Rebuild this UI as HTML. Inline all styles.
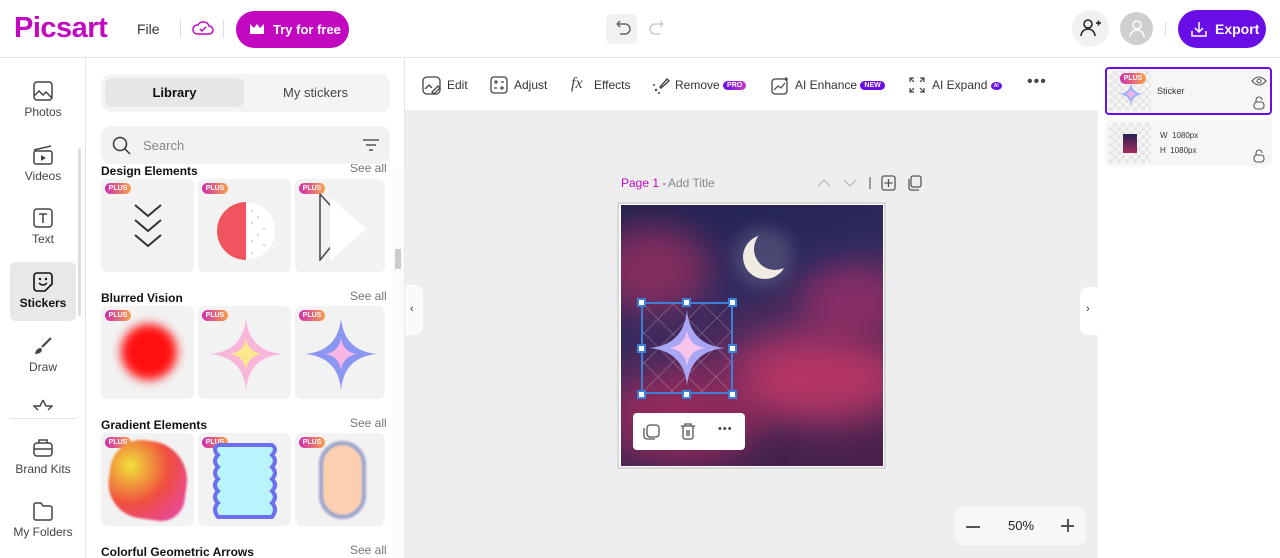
<!DOCTYPE html>
<html><head><meta charset="utf-8"><style>
*{box-sizing:border-box;margin:0;padding:0}
body{width:1280px;height:558px;overflow:hidden;font-family:"Liberation Sans",sans-serif;background:#fff;position:relative;color:#222}
.a{position:absolute}
.top{left:0;top:0;width:1280px;height:58px;border-bottom:1px solid #e6e6e6;background:#fff}
.logo{left:14px;top:12px;font-size:29px;font-weight:bold;color:#c209c1;letter-spacing:-0.5px}
.rail .it{position:absolute;left:10px;width:66px;text-align:center;font-size:12px;color:#444}
.rail svg{display:block;margin:0 auto 4px}
.tabs{left:101px;top:74px;width:289px;height:38px;background:#f4f4f4;border-radius:10px}
.search{left:101px;top:126px;width:289px;height:38px;background:#f2f2f2;border-radius:10px}
.sec{font-size:12px;color:#111;font-weight:bold}
.see{font-size:12px;color:#777}
.card{position:absolute;width:93px;height:93px;background:#f2f2f2;border-radius:6px;overflow:hidden}
.plus{position:absolute;left:4px;top:4px;width:26px;height:11px;border-radius:6px;background:linear-gradient(90deg,#d02cb0,#f8a24a);color:#fff;font-size:7px;font-weight:bold;text-align:center;line-height:11px}
.tb{font-size:12px;color:#333;top:78px}
.badge{display:inline-block;font-size:7px;font-weight:bold;color:#fff;border-radius:6px;padding:1px 4px;vertical-align:middle}
</style></head><body>
<div class="a top"></div>
<div class="a logo">Picsart</div>
<div class="a" style="left:137px;top:21px;font-size:14px;color:#333">File</div>
<div class="a" style="left:180px;top:20px;width:1px;height:18px;background:#ddd"></div>
<svg class="a" style="left:192px;top:19px" width="22" height="18" viewBox="0 0 22 18"><path d="M5 15h12a4 4 0 0 0 0-8 6 6 0 0 0-11-1A4.5 4.5 0 0 0 5 15z" fill="none" stroke="#c209c1" stroke-width="1.5"/><path d="M8 10l2 2 4-4" fill="none" stroke="#c209c1" stroke-width="1.5"/></svg>
<div class="a" style="left:223px;top:20px;width:1px;height:18px;background:#ddd"></div>
<div class="a" style="left:236px;top:11px;width:113px;height:37px;border-radius:19px;background:#c209c1;color:#fff;font-size:13px;font-weight:bold;line-height:37px;padding-left:37px;white-space:nowrap">Try for free</div>
<svg class="a" style="left:249px;top:23px" width="16" height="12"><path d="M1 1l4 4 3-4 3 4 4-4v10H1z" fill="#fff"/></svg>
<div class="a" style="left:606px;top:14px;width:31px;height:30px;border-radius:6px;background:#f1f1f1"></div>
<svg class="a" style="left:612px;top:20px" width="20" height="18"><path d="M5 4h8a5 5 0 0 1 0 10H8M5 4l3-3M5 4l3 3" fill="none" stroke="#666" stroke-width="1.5"/></svg>
<svg class="a" style="left:648px;top:20px" width="20" height="18"><path d="M15 4H7a5 5 0 0 0 0 10h5M15 4l-3-3M15 4l-3 3" fill="none" stroke="#ccc" stroke-width="1.5"/></svg>
<div class="a" style="left:1072px;top:10px;width:37px;height:37px;border-radius:50%;background:#f1f1f1"></div>
<svg class="a" style="left:1080px;top:18px" width="22" height="20"><circle cx="8" cy="6" r="4" fill="none" stroke="#222" stroke-width="1.5"/><path d="M1 18a7 7 0 0 1 14 0M16 5h5M18.5 2.5v5" fill="none" stroke="#222" stroke-width="1.5"/></svg>
<div class="a" style="left:1120px;top:12px;width:33px;height:33px;border-radius:50%;background:#cfcfcf"></div>
<svg class="a" style="left:1127px;top:18px" width="20" height="20"><circle cx="10" cy="7" r="4" fill="none" stroke="#fff" stroke-width="1.5"/><path d="M3 19a7 7 0 0 1 14 0" fill="none" stroke="#fff" stroke-width="1.5"/></svg>
<div class="a" style="left:1165px;top:22px;width:1px;height:14px;background:#ddd"></div>
<div class="a" style="left:1178px;top:10px;width:88px;height:38px;border-radius:19px;background:#6a0ee8;color:#fff;font-size:14px;font-weight:bold;line-height:38px;padding-left:37px">Export</div>
<svg class="a" style="left:1190px;top:20px" width="18" height="18"><path d="M9 2v10M5 8l4 4 4-4M2 11v5h14v-5" fill="none" stroke="#fff" stroke-width="1.5"/></svg>

<!-- left rail -->
<div class="a" style="left:85px;top:58px;width:1px;height:500px;background:#e6e6e6"></div>
<div class="a" style="left:78px;top:148px;width:3px;height:168px;background:#ddd;border-radius:2px"></div>
<div class="rail">
<div class="it" style="top:81px"><svg width="20" height="20"><rect x="1" y="1" width="18" height="18" rx="3" fill="none" stroke="#444" stroke-width="1.5"/><path d="M1 15l5-5 4 4 3-3 6 6" fill="none" stroke="#444" stroke-width="1.5"/></svg>Photos</div>
<div class="it" style="top:145px"><svg width="20" height="20"><rect x="1" y="6" width="18" height="13" rx="2" fill="none" stroke="#444" stroke-width="1.5"/><path d="M1 5l17-4" stroke="#444" stroke-width="1.5"/><path d="M8 10v6l5-3z" fill="#444"/></svg>Videos</div>
<div class="it" style="top:208px"><svg width="20" height="20"><rect x="1" y="1" width="18" height="18" rx="3" fill="none" stroke="#444" stroke-width="1.5"/><path d="M6 6h8M10 6v9" stroke="#444" stroke-width="1.5"/></svg>Text</div>
<div class="a" style="left:10px;top:262px;width:66px;height:59px;background:#e8e8e8;border-radius:6px"></div>
<div class="it" style="top:272px;color:#111;font-weight:bold"><svg width="20" height="20"><path d="M4 1h12a3 3 0 0 1 3 3v8l-7 7H4a3 3 0 0 1-3-3V4a3 3 0 0 1 3-3z" fill="none" stroke="#111" stroke-width="1.6"/><path d="M6 11q4 4 8 0" fill="none" stroke="#111" stroke-width="1.5"/><circle cx="7" cy="7" r="1.2" fill="#111"/><circle cx="13" cy="7" r="1.2" fill="#111"/></svg>Stickers</div>
<div class="it" style="top:336px"><svg width="20" height="20"><path d="M18 2L9 11" stroke="#444" stroke-width="2"/><path d="M8 12q-5 0-6 6 6 0 7-4z" fill="#444"/></svg>Draw</div>
<svg class="a" style="left:33px;top:399px" width="20" height="12"><path d="M10 1l3 6h6l-4 4M10 1l-3 6H1l4 4" fill="none" stroke="#444" stroke-width="1.4"/></svg>
<div class="a" style="left:10px;top:418px;width:66px;height:1px;background:#e3e3e3"></div>
<div class="it" style="top:438px"><svg width="20" height="20"><rect x="1" y="5" width="18" height="13" rx="3" fill="none" stroke="#444" stroke-width="1.5"/><path d="M6 5V2h8v3M1 11h18" fill="none" stroke="#444" stroke-width="1.5"/></svg>Brand Kits</div>
<div class="it" style="top:501px"><svg width="20" height="20"><path d="M1 4a2 2 0 0 1 2-2h5l2 3h7a2 2 0 0 1 2 2v10a2 2 0 0 1-2 2H3a2 2 0 0 1-2-2z" fill="none" stroke="#444" stroke-width="1.5"/></svg>My Folders</div>
</div>

<!-- panel -->
<div class="a tabs"></div>
<div class="a" style="left:105px;top:78px;width:139px;height:29px;background:#e6e6e6;border-radius:7px;text-align:center;line-height:29px;font-size:13px;font-weight:bold;color:#111">Library</div>
<div class="a" style="left:244px;top:78px;width:143px;height:29px;text-align:center;line-height:29px;font-size:13px;color:#444">My stickers</div>
<div class="a search"></div>
<svg class="a" style="left:112px;top:136px" width="20" height="20"><circle cx="8" cy="8" r="6.5" fill="none" stroke="#333" stroke-width="1.5"/><path d="M13 13l5 5" stroke="#333" stroke-width="1.5"/></svg>
<div class="a" style="left:143px;top:138px;font-size:13px;color:#888">Search</div>
<svg class="a" style="left:362px;top:138px" width="18" height="14"><path d="M1 2h16M4 7h10M7 12h4" stroke="#555" stroke-width="1.5"/></svg>
<div class="a" style="left:393px;top:168px;width:10px;height:390px;background:#fafafa"></div>
<div class="a" style="left:395px;top:249px;width:6px;height:20px;background:#ccc"></div>
<div class="a" style="left:85px;top:164px;width:308px;height:394px;overflow:hidden">
 <div class="a sec" style="left:16px;top:0">Design Elements</div><div class="a see" style="left:265px;top:-3px">See all</div>
 <div class="card" style="left:16px;top:15px"><div class="plus">PLUS</div><svg class="a" style="left:32px;top:24px" width="30" height="46"><path d="M2 2l13 11 13-11M2 17l13 11 13-11M2 32l13 11 13-11" fill="none" stroke="#333" stroke-width="2"/></svg></div>
 <div class="card" style="left:113px;top:15px"><div class="plus">PLUS</div><svg class="a" style="left:18px;top:22px" width="60" height="60"><path d="M30 1a29 29 0 0 0 0 58z" fill="#f0545e"/><path d="M30 1a29 29 0 0 1 0 58z" fill="#fff"/><g fill="#999"><circle cx="36" cy="10" r=".7"/><circle cx="42" cy="16" r=".7"/><circle cx="36" cy="22" r=".7"/><circle cx="48" cy="28" r=".7"/><circle cx="42" cy="34" r=".7"/><circle cx="36" cy="40" r=".7"/><circle cx="48" cy="44" r=".7"/><circle cx="36" cy="52" r=".7"/></g></svg></div>
 <div class="card" style="left:210px;top:15px;width:90px"><div class="plus">PLUS</div><svg class="a" style="left:20px;top:12px" width="60" height="70"><path d="M5 3v66l18-22" fill="none" stroke="#444" stroke-width="1.5"/><path d="M5 3l18 20" stroke="#444" stroke-width="1.5"/><path d="M15 6l36 32-36 32z" fill="#fff"/></svg></div>
 <div class="a sec" style="left:16px;top:127px">Blurred Vision</div><div class="a see" style="left:265px;top:125px">See all</div>
 <div class="card" style="left:16px;top:142px"><div class="plus">PLUS</div><div class="a" style="left:20px;top:18px;width:56px;height:56px;border-radius:50%;background:#ff1010;filter:blur(5px)"></div></div>
 <div class="card" style="left:113px;top:142px"><div class="plus">PLUS</div><svg class="a" style="left:10px;top:10px" width="76" height="76"><path d="M38 2Q41 35 74 38Q41 41 38 74Q35 41 2 38Q35 35 38 2z" fill="#f7b6da"/><path d="M38 22Q40 36 54 38Q40 40 38 54Q36 40 22 38Q36 36 38 22z" fill="#fbe78c"/></svg></div>
 <div class="card" style="left:210px;top:142px;width:90px"><div class="plus">PLUS</div><svg class="a" style="left:8px;top:10px" width="76" height="76"><path d="M38 2Q41 35 74 38Q41 41 38 74Q35 41 2 38Q35 35 38 2z" fill="#8b95f2"/><path d="M38 22Q40 36 54 38Q40 40 38 54Q36 40 22 38Q36 36 38 22z" fill="#f7b6e4"/></svg></div>
 <div class="a sec" style="left:16px;top:254px">Gradient Elements</div><div class="a see" style="left:265px;top:252px">See all</div>
 <div class="card" style="left:16px;top:269px"><div class="plus">PLUS</div><div class="a" style="left:8px;top:8px;width:78px;height:78px;border-radius:40% 50% 30% 45%;background:radial-gradient(circle at 25% 35%,#f1e23a,#f04d3f 50%,#e449b8);filter:blur(1px);transform:rotate(8deg)"></div></div>
 <div class="card" style="left:113px;top:269px"><div class="plus">PLUS</div><svg class="a" style="left:12px;top:8px" width="70" height="80"><path d="M8 4h54q6 4 0 10q6 6 0 12q6 6 0 12q6 6 0 12q6 6 0 12q6 6 0 14H8q-6-8 0-14q-6-6 0-12q-6-6 0-12q-6-6 0-12q-6-6 0-12q-6-6 0-10z" fill="#b8f4fb" stroke="#6d6ef0" stroke-width="4"/></svg></div>
 <div class="card" style="left:210px;top:269px;width:90px"><div class="plus">PLUS</div><div class="a" style="left:24px;top:8px;width:47px;height:78px;border-radius:24px;background:#fccfb0;box-shadow:inset 0 0 0 4px #9aa4cf;filter:blur(1px)"></div></div>
 <div class="a sec" style="left:16px;top:381px">Colorful Geometric Arrows</div><div class="a see" style="left:265px;top:379px">See all</div>
</div>

<!-- canvas area -->
<div class="a" style="left:404px;top:58px;width:694px;height:500px;background:#eeeeee;border-left:1px solid #e6e6e6"></div>
<div class="a" style="left:405px;top:58px;width:693px;height:52px;background:#fff"></div>
<div class="a" style="left:405px;top:285px;width:18px;height:50px;background:#fafafa;border-radius:0 8px 8px 0"></div>
<div class="a" style="left:410px;top:303px;font-size:11px;color:#333">‹</div>
<div class="a" style="left:1080px;top:287px;width:18px;height:48px;background:#fff;border-radius:8px 0 0 8px"></div>
<div class="a" style="left:1086px;top:303px;font-size:11px;color:#333">›</div>
<svg class="a" style="left:422px;top:76px" width="20" height="20"><rect x="1" y="1" width="17" height="17" rx="4" fill="none" stroke="#444" stroke-width="1.3"/><path d="M3 13l4-4 3 3M10 16l6-6 2 2-6 6z" fill="none" stroke="#444" stroke-width="1.3"/></svg>
<div class="a tb" style="left:447px">Edit</div>
<svg class="a" style="left:490px;top:76px" width="18" height="18"><rect x="1" y="1" width="16" height="16" rx="3" fill="none" stroke="#444" stroke-width="1.3"/><path d="M4 6h4M11 6h3M6 4v4M4 12h3M10 12h4M12 10v4" stroke="#444" stroke-width="1.2"/></svg>
<div class="a tb" style="left:514px">Adjust</div>
<div class="a" style="left:571px;top:75px;font-size:16px;font-style:italic;font-family:'Liberation Serif',serif;color:#444">fx</div>
<div class="a tb" style="left:594px">Effects</div>
<svg class="a" style="left:652px;top:76px" width="18" height="18"><path d="M8 11l7-8 2 2-8 7z" fill="none" stroke="#444" stroke-width="1.4"/><circle cx="4" cy="14" r="1.2" fill="#444"/><circle cx="2" cy="9" r="1" fill="#444"/><circle cx="7" cy="17" r="1" fill="#444"/></svg>
<div class="a tb" style="left:675px">Remove <span class="badge" style="background:linear-gradient(90deg,#6a0ee8,#c63ac6)">PRO</span></div>
<svg class="a" style="left:771px;top:76px" width="19" height="19"><rect x="1" y="3" width="15" height="15" rx="3" fill="none" stroke="#444" stroke-width="1.3"/><path d="M3 14l4-4 3 2 4-5M15 1v4M13 3h4" fill="none" stroke="#444" stroke-width="1.2"/></svg>
<div class="a tb" style="left:795px">AI Enhance <span class="badge" style="background:#6a0ee8">NEW</span></div>
<svg class="a" style="left:909px;top:77px" width="16" height="16"><path d="M1 5V1h4M11 1h4v4M15 11v4h-4M5 15H1v-4M1 1l4 4M15 1l-4 4M15 15l-4-4M1 15l4-4" fill="none" stroke="#444" stroke-width="1.2"/></svg>
<div class="a tb" style="left:932px">AI Expand <span class="badge" style="background:#6a0ee8;border-radius:50%;padding:1px 3px;font-size:5px">AI</span></div>
<div class="a" style="left:1027px;top:73px;font-size:16px;color:#444;letter-spacing:1px">•••</div>

<div class="a" style="left:621px;top:176px;font-size:12px;color:#c209c1">Page 1 -</div>
<div class="a" style="left:668px;top:176px;font-size:12px;color:#888">Add Title</div>
<svg class="a" style="left:816px;top:177px" width="60" height="12"><path d="M2 9l6-6 6 6M28 3l6 6 6-6" fill="none" stroke="#bbb" stroke-width="1.3"/><path d="M54 0v12" stroke="#666" stroke-width="1.2"/></svg>
<svg class="a" style="left:880px;top:174px" width="42" height="18"><rect x="2" y="2" width="13" height="14" rx="2" fill="none" stroke="#555" stroke-width="1.3"/><path d="M8.5 5v8M4.5 9h8" stroke="#555" stroke-width="1.3"/><rect x="31" y="2" width="10" height="11" rx="2" fill="none" stroke="#555" stroke-width="1.3"/><path d="M29 5v9a2 2 0 0 0 2 2h8" fill="none" stroke="#555" stroke-width="1.3"/></svg>

<div class="a" style="left:617px;top:202px;width:269px;height:267px;border:2px solid #d8d8d8;background:#fff"></div>
<div class="a" style="left:621px;top:205px;width:262px;height:261px;overflow:hidden;background:linear-gradient(160deg,#1e2150 0%,#2e2a5e 35%,#5a2a5c 55%,#3a2350 80%,#4a2048 100%)">
 <div class="a" style="left:-30px;top:20px;width:120px;height:90px;border-radius:50%;background:#9a2f60;filter:blur(18px);opacity:.8"></div>
 <div class="a" style="left:110px;top:130px;width:180px;height:90px;border-radius:50%;background:#d03a6a;filter:blur(20px);opacity:.8"></div>
 <div class="a" style="left:-10px;top:170px;width:150px;height:90px;border-radius:50%;background:#b02c5c;filter:blur(18px);opacity:.7"></div>
 <div class="a" style="left:180px;top:60px;width:100px;height:70px;border-radius:50%;background:#a0306a;filter:blur(16px);opacity:.7"></div>
 <div class="a" style="left:112px;top:22px;width:60px;height:60px;border-radius:50%;background:rgba(255,255,255,.15);filter:blur(8px)"></div>
 <svg class="a" style="left:116px;top:24px" width="60" height="60"><defs><mask id="m"><rect width="60" height="60" fill="#fff"/><circle cx="38" cy="20" r="21" fill="#000"/></mask></defs><circle cx="28" cy="28" r="22" fill="#efebe3" mask="url(#m)"/></svg>
</div>
<div class="a" style="left:641px;top:302px;width:92px;height:92px;border:2px solid #3d7fd8"></div>
<svg class="a" style="left:643px;top:304px" width="88" height="88"><path d="M0 30L30 0M0 60L60 0M0 88L88 0M28 88L88 28M58 88L88 58M0 58L30 88M0 28L60 88M0 0L88 88M30 0L88 58M60 0L88 28" stroke="rgba(255,255,255,.35)" stroke-width=".6"/><path d="M44 6Q47 41 82 44Q47 47 44 82Q41 47 6 44Q41 41 44 6z" fill="#a9a7f4"/><path d="M44 26Q46 42 62 44Q46 46 44 62Q42 46 26 44Q42 42 44 26z" fill="#f7c4ea"/></svg>
<div class="a" style="left:637px;top:298px;width:9px;height:9px;border:2px solid #3d7fd8;background:#fff"></div>
<div class="a" style="left:682px;top:298px;width:9px;height:9px;border:2px solid #3d7fd8;background:#fff"></div>
<div class="a" style="left:728px;top:298px;width:9px;height:9px;border:2px solid #3d7fd8;background:#fff"></div>
<div class="a" style="left:637px;top:344px;width:9px;height:9px;border:2px solid #3d7fd8;background:#fff"></div>
<div class="a" style="left:728px;top:344px;width:9px;height:9px;border:2px solid #3d7fd8;background:#fff"></div>
<div class="a" style="left:637px;top:390px;width:9px;height:9px;border:2px solid #3d7fd8;background:#fff"></div>
<div class="a" style="left:682px;top:390px;width:9px;height:9px;border:2px solid #3d7fd8;background:#fff"></div>
<div class="a" style="left:728px;top:390px;width:9px;height:9px;border:2px solid #3d7fd8;background:#fff"></div>
<div class="a" style="left:633px;top:413px;width:112px;height:37px;background:#fff;border-radius:4px"></div>
<svg class="a" style="left:642px;top:423px" width="20" height="18"><rect x="5" y="2" width="12" height="12" rx="3" fill="none" stroke="#555" stroke-width="1.3"/><path d="M2 5v8a3 3 0 0 0 3 3h8" fill="none" stroke="#555" stroke-width="1.3"/></svg>
<svg class="a" style="left:680px;top:422px" width="16" height="18"><path d="M1 4h14M5 4V2h6v2M3 4v11a2 2 0 0 0 2 2h6a2 2 0 0 0 2-2V4M7 8v6M9 8v6" fill="none" stroke="#555" stroke-width="1.3"/></svg>
<div class="a" style="left:718px;top:423px;font-size:11px;color:#444;letter-spacing:1px">•••</div>

<div class="a" style="left:955px;top:507px;width:131px;height:38px;background:#f7f7f7;border-radius:8px"></div>
<div class="a" style="left:966px;top:526px;width:14px;height:1.5px;background:#555"></div>
<div class="a" style="left:1008px;top:518px;font-size:13px;color:#222">50%</div>
<div class="a" style="left:1061px;top:525px;width:13px;height:1.5px;background:#555"></div>
<div class="a" style="left:1067px;top:519px;width:1.5px;height:13px;background:#555"></div>

<!-- right panel -->
<div class="a" style="left:1105px;top:67px;width:167px;height:48px;border:2px solid #6a0ee8;border-radius:4px;background:#f6f6f6"></div>
<div class="a" style="left:1109px;top:71px;width:42px;height:40px;background:repeating-conic-gradient(#e6e6e6 0 25%,#f6f6f6 0 50%) 0 0/8px 8px"></div>
<svg class="a" style="left:1117px;top:80px" width="28" height="28"><path d="M14 2Q15 13 26 14Q15 15 14 26Q13 15 2 14Q13 13 14 2z" fill="#9ab0f4"/><path d="M14 8Q15 13 20 14Q15 15 14 20Q13 15 8 14Q13 13 14 8z" fill="#f0b4e6"/></svg>
<div class="a" style="left:1120px;top:73px;width:26px;height:11px;border-radius:6px;background:linear-gradient(90deg,#d02cb0,#f8a24a);color:#fff;font-size:7px;font-weight:bold;text-align:center;line-height:11px">PLUS</div>
<div class="a" style="left:1157px;top:86px;font-size:9px;color:#333">Sticker</div>
<svg class="a" style="left:1251px;top:75px" width="16" height="12"><path d="M1 6q7-8 14 0q-7 8-14 0z" fill="none" stroke="#555" stroke-width="1.1"/><circle cx="8" cy="6" r="2" fill="none" stroke="#555" stroke-width="1.1"/></svg>
<svg class="a" style="left:1253px;top:96px" width="12" height="14"><path d="M3 6V4a3 3 0 0 1 6 0" fill="none" stroke="#555" stroke-width="1.1"/><rect x="1" y="6" width="10" height="7" rx="3" fill="none" stroke="#555" stroke-width="1.1"/></svg>
<div class="a" style="left:1106px;top:120px;width:166px;height:46px;border-radius:4px;background:#f6f6f6"></div>
<div class="a" style="left:1109px;top:123px;width:42px;height:40px;background:repeating-conic-gradient(#e6e6e6 0 25%,#f6f6f6 0 50%) 0 0/8px 8px"></div>
<div class="a" style="left:1123px;top:134px;width:14px;height:19px;background:linear-gradient(#2a2050,#a02c5c)"></div>
<div class="a" style="left:1160px;top:131px;font-size:8px;color:#333">W&nbsp; 1080px</div>
<div class="a" style="left:1160px;top:146px;font-size:8px;color:#333">H&nbsp; 1080px</div>
<svg class="a" style="left:1253px;top:149px" width="12" height="14"><path d="M3 6V4a3 3 0 0 1 6 0" fill="none" stroke="#555" stroke-width="1.1"/><rect x="1" y="6" width="10" height="7" rx="3" fill="none" stroke="#555" stroke-width="1.1"/></svg>
</body></html>
